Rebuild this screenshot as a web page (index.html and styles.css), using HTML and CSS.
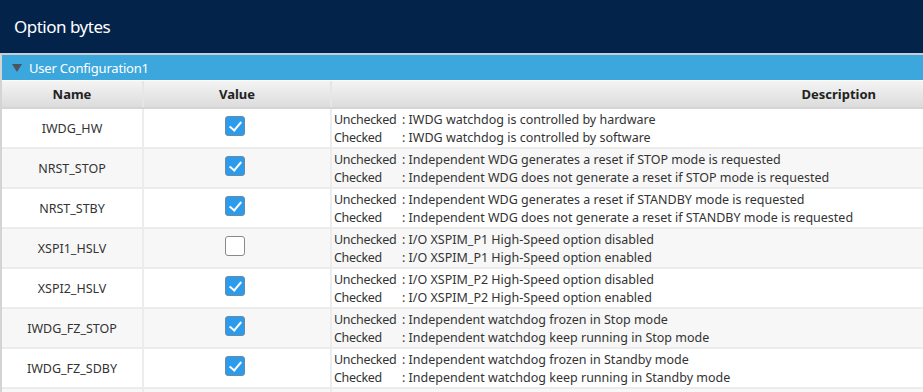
FILE: index.html
```html
<!DOCTYPE html>
<html lang="en">
<head>
  <meta charset="UTF-8" />
  <title>Option bytes</title>
  <link rel="stylesheet" href="styles.css">
</head>
<body>

<div class="title-bar">Option bytes</div>

<div class="panel">
  <div class="section-head">
    <span class="arrow"></span>
    <span>User Configuration1</span>
  </div>

  <table class="opt-table">
    <thead>
      <tr>
        <th class="col-name">Name</th>
        <th class="col-value">Value</th>
        <th class="col-desc">Description</th>
      </tr>
    </thead>
    <tbody>
      <tr>
        <td class="name">IWDG_HW</td>
        <td class="value"><span class="check on"></span></td>
        <td class="desc">
          <div><span class="lbl">Unchecked</span>: IWDG watchdog is controlled by hardware</div>
          <div><span class="lbl">Checked</span>: IWDG watchdog is controlled by software</div>
        </td>
      </tr>
      <tr>
        <td class="name">NRST_STOP</td>
        <td class="value"><span class="check on"></span></td>
        <td class="desc">
          <div><span class="lbl">Unchecked</span>: Independent WDG generates a reset if STOP mode is requested</div>
          <div><span class="lbl">Checked</span>: Independent WDG does not generate a reset if STOP mode is requested</div>
        </td>
      </tr>
      <tr>
        <td class="name">NRST_STBY</td>
        <td class="value"><span class="check on"></span></td>
        <td class="desc">
          <div><span class="lbl">Unchecked</span>: Independent WDG generates a reset if STANDBY mode is requested</div>
          <div><span class="lbl">Checked</span>: Independent WDG does not generate a reset if STANDBY mode is requested</div>
        </td>
      </tr>
      <tr>
        <td class="name">XSPI1_HSLV</td>
        <td class="value"><span class="check"></span></td>
        <td class="desc">
          <div><span class="lbl">Unchecked</span>: I/O XSPIM_P1 High-Speed option disabled</div>
          <div><span class="lbl">Checked</span>: I/O XSPIM_P1 High-Speed option enabled</div>
        </td>
      </tr>
      <tr>
        <td class="name">XSPI2_HSLV</td>
        <td class="value"><span class="check on"></span></td>
        <td class="desc">
          <div><span class="lbl">Unchecked</span>: I/O XSPIM_P2 High-Speed option disabled</div>
          <div><span class="lbl">Checked</span>: I/O XSPIM_P2 High-Speed option enabled</div>
        </td>
      </tr>
      <tr>
        <td class="name">IWDG_FZ_STOP</td>
        <td class="value"><span class="check on"></span></td>
        <td class="desc">
          <div><span class="lbl">Unchecked</span>: Independent watchdog frozen in Stop mode</div>
          <div><span class="lbl">Checked</span>: Independent watchdog keep running in Stop mode</div>
        </td>
      </tr>
      <tr>
        <td class="name">IWDG_FZ_SDBY</td>
        <td class="value"><span class="check on"></span></td>
        <td class="desc">
          <div><span class="lbl">Unchecked</span>: Independent watchdog frozen in Standby mode</div>
          <div><span class="lbl">Checked</span>: Independent watchdog keep running in Standby mode</div>
        </td>
      </tr>
      <tr>
        <td class="name"></td>
        <td class="value"></td>
        <td class="desc"></td>
      </tr>
    </tbody>
  </table>
</div>

</body>
</html>
```

FILE: styles.css
```css
body {
  margin: 0;
  font-family: "Noto Sans", "Open Sans", sans-serif;
  background: #ffffff;
  overflow: hidden;
}
.title-bar {
  background: #03234b;
  color: #ffffff;
  padding-left: 14px;
  font-size: 17px;
  letter-spacing: -0.5px;
  line-height: 54px;
  border-bottom: 2px solid #c9ced6;
  box-sizing: border-box;
  height: 55px;
}
.panel {
  border-left: 2px solid #d4d4d4;
}
.section-head {
  display: flex;
  align-items: center;
  gap: 7px;
  height: 25px;
  padding-left: 10px;
  background: #3ca7dc;
  color: #ffffff;
  font-size: 13px;
  letter-spacing: -0.2px;
  border-bottom: 1px solid #ffffff;
}
.arrow {
  width: 0;
  height: 0;
  border-left: 5px solid transparent;
  border-right: 5px solid transparent;
  border-top: 8px solid #4a5560;
}
.opt-table {
  width: 100%;
  border-collapse: collapse;
  table-layout: fixed;
  font-size: 12.5px;
  color: #333333;
}
.opt-table th {
  height: 26px;
  padding: 0;
  background: linear-gradient(#f4f4f4, #dcdcdc);
  border-right: 2px solid #e6e6e6;
  border-bottom: 2px solid #d4d4d4;
  font-size: 13px;
  font-weight: bold;
  color: #222222;
}
.col-name { width: 140px; }
.col-value { width: 186px; }
.opt-table th.col-desc {
  text-align: right;
  padding-right: 47px;
  border-right: none;
}
.opt-table td {
  height: 38px;
  padding: 0;
  border-right: 2px solid #ececec;
  border-bottom: 2px solid #ececec;
  vertical-align: middle;
}
.opt-table tbody tr:nth-child(even) td {
  background: #f7f7f7;
}
.opt-table td.name {
  text-align: center;
}
.opt-table td.value {
  text-align: center;
  height: 34px;
  padding-right: 4px;
  padding-bottom: 4px;
}
.opt-table td.desc {
  height: 36px;
  padding-left: 2px;
  padding-top: 2px;
  font-size: 12.5px;
  line-height: 18px;
  border-right: none;
  white-space: nowrap;
}
.lbl {
  display: inline-block;
  width: 68px;
  letter-spacing: -0.3px;
}
.check {
  display: inline-block;
  width: 18px;
  height: 18px;
  border: 1px solid #8a8a8a;
  border-radius: 3px;
  background: #ffffff;
  vertical-align: middle;
  position: relative;
  box-sizing: content-box;
}
.check.on {
  background: #2d9bec;
  border-color: #6e8aa0;
}
.check.on::after {
  content: "";
  position: absolute;
  left: 6px;
  top: 2px;
  width: 5px;
  height: 10px;
  border-right: 2px solid #ffffff;
  border-bottom: 2px solid #ffffff;
  transform: rotate(40deg);
}
```
